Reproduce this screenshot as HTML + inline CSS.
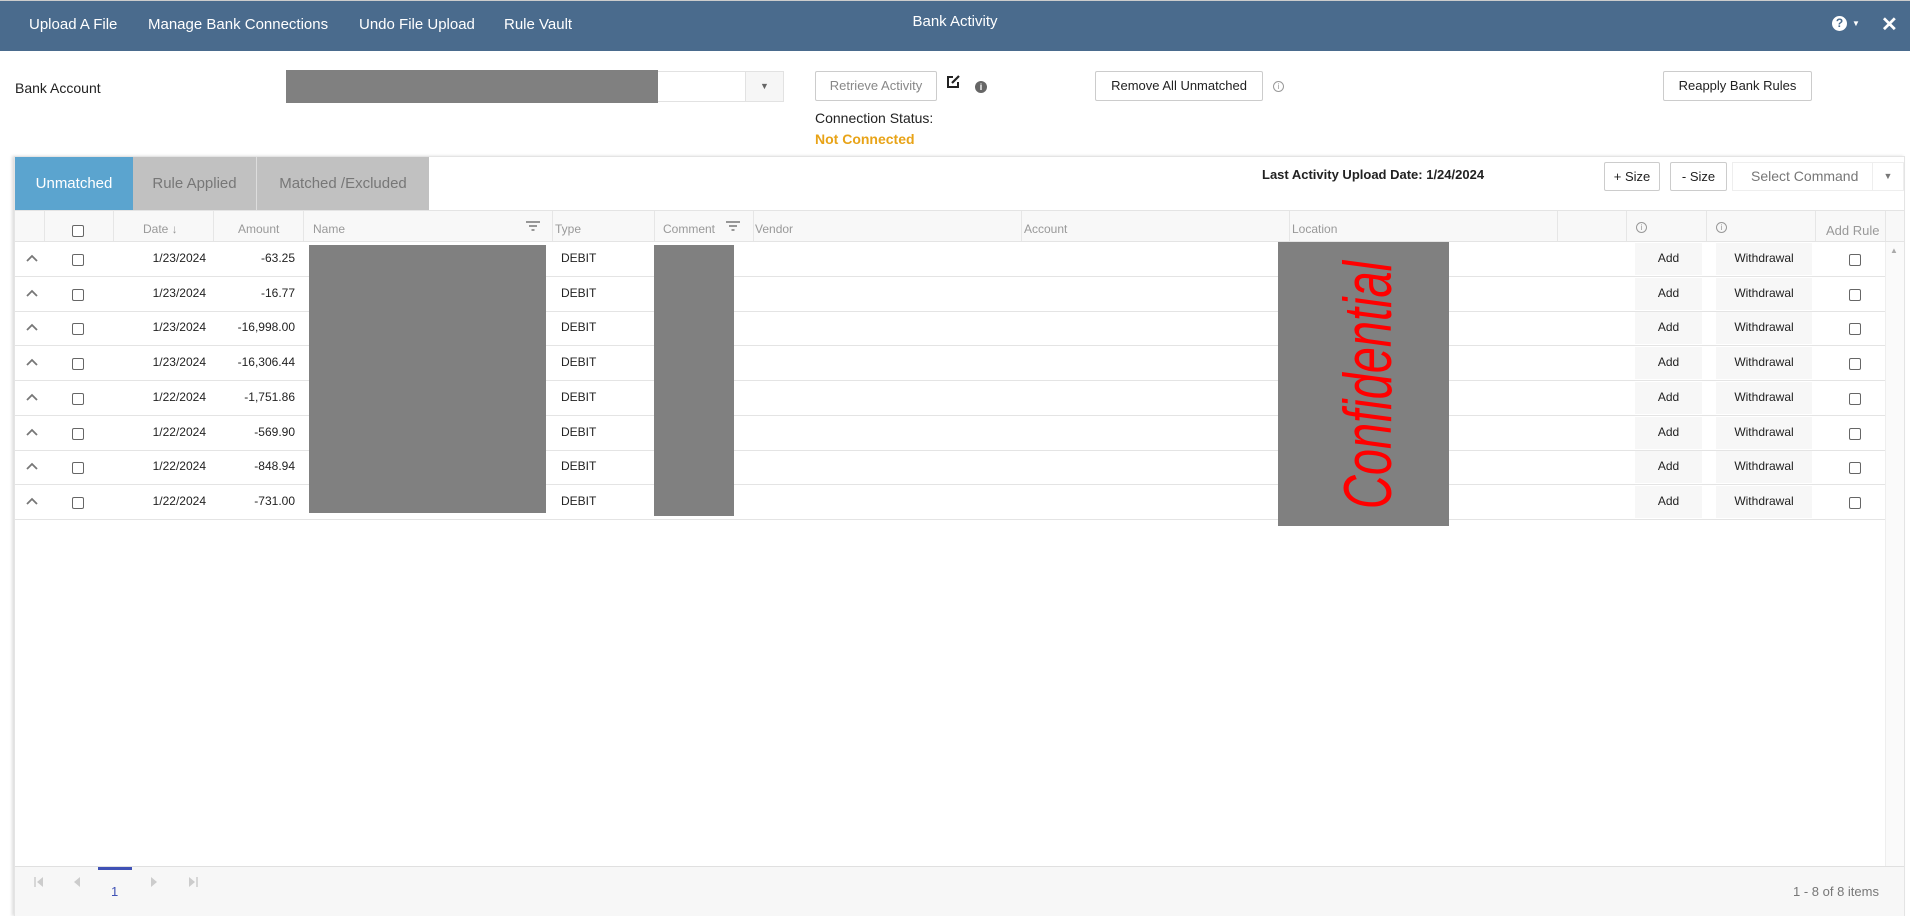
<!DOCTYPE html>
<html><head><meta charset="utf-8"><style>
*{box-sizing:border-box;margin:0;padding:0}
body{width:1910px;height:916px;position:relative;background:#fff;font-family:"Liberation Sans",Arial,sans-serif;overflow:hidden;color:#222}
.a{position:absolute}
.top{left:0;top:0;width:1910px;height:51px;background:#4a6b8d;border-top:1px solid #ccc}
.nav{color:#fff;font-size:15px;top:16px}
.btn{position:absolute;border:1px solid #ccc;background:#fff;font-size:13px;text-align:center;border-radius:2px}
.hd{font-size:12px;color:#999;top:222px}
.cell{font-size:12px;color:#222}
.cb{position:absolute;width:12px;height:12px;border:1px solid #666;border-radius:2px;background:#fff}
.gray{position:absolute;background:#808080}
.ii{position:absolute;width:11px;height:11px;border:1px solid #999;border-radius:50%;font-size:8px;color:#999;text-align:center;line-height:9px}
</style></head><body>
<div class="a top"></div>
<div class="a nav" style="left:29px">Upload A File</div>
<div class="a nav" style="left:148px">Manage Bank Connections</div>
<div class="a nav" style="left:359px">Undo File Upload</div>
<div class="a nav" style="left:504px">Rule Vault</div>
<div class="a" style="left:0;width:1910px;text-align:center;top:13px;color:#fff;font-size:15px">Bank Activity</div>
<div class="a" style="left:1832px;top:16px;width:15px;height:15px;border-radius:50%;background:#fff;color:#4a6b8d;font-size:12px;font-weight:bold;text-align:center;line-height:15px">?</div>
<div class="a" style="left:1852px;top:19px;color:#fff;font-size:8px">▼</div>
<div class="a" style="left:1881px;top:12px;color:#fff;font-size:20px;font-weight:bold">✕</div>

<div class="a" style="left:15px;top:80px;font-size:14px">Bank Account</div>
<div class="a" style="left:286px;top:71px;width:498px;height:31px;border:1px solid #e2e2e2"></div>
<div class="gray" style="left:286px;top:70px;width:372px;height:33px"></div>
<div class="a" style="left:745px;top:72px;width:38px;height:29px;background:#f6f6f6;border-left:1px solid #e2e2e2;text-align:center;font-size:9px;color:#666;line-height:29px">▼</div>
<div class="btn" style="left:815px;top:71px;width:122px;height:30px;line-height:28px;color:#888">Retrieve Activity</div>
<svg class="a" style="left:945px;top:74px" width="16" height="16" viewBox="0 0 16 16"><path d="M8 3H3v10h10V8" fill="none" stroke="#222" stroke-width="2"/><path d="M7 9l7-7" stroke="#222" stroke-width="2.2"/></svg>
<div class="a" style="left:975px;top:81px;width:12px;height:12px;border-radius:50%;background:#666;color:#fff;font-size:9px;text-align:center;line-height:12px;font-weight:bold">i</div>
<div class="a" style="left:815px;top:110px;font-size:14px">Connection Status:</div>
<div class="a" style="left:815px;top:131px;font-size:14px;font-weight:bold;color:#e8a317">Not Connected</div>
<div class="btn" style="left:1095px;top:71px;width:168px;height:30px;line-height:28px">Remove All Unmatched</div>
<div class="ii" style="left:1273px;top:81px">i</div>
<div class="btn" style="left:1663px;top:71px;width:149px;height:30px;line-height:28px">Reapply Bank Rules</div>

<div class="a" style="left:14px;top:156px;width:1891px;height:760px;border:1px solid #e4e4e4;box-shadow:-2px 0 3px #ddd"></div>
<div class="a" style="left:15px;top:157px;width:118px;height:53px;background:#5ba4cf;color:#fff;font-size:15px;text-align:center;line-height:53px">Unmatched</div>
<div class="a" style="left:133px;top:157px;width:124px;height:53px;background:#c1c1c1;color:#777;font-size:15px;text-align:center;line-height:53px;border-right:1px solid #ddd">Rule Applied</div>
<div class="a" style="left:257px;top:157px;width:172px;height:53px;background:#c1c1c1;color:#777;font-size:15px;text-align:center;line-height:53px">Matched /Excluded</div>
<div class="a" style="left:1262px;top:167px;font-size:13px;font-weight:bold">Last Activity Upload Date: 1/24/2024</div>
<div class="btn" style="left:1604px;top:162px;width:56px;height:29px;line-height:27px">+ Size</div>
<div class="btn" style="left:1670px;top:162px;width:57px;height:29px;line-height:27px">- Size</div>
<div class="a" style="left:1732px;top:162px;width:172px;height:29px;border:1px solid #eee;font-size:14px;color:#777;line-height:27px;padding-left:18px">Select Command</div>
<div class="a" style="left:1872px;top:163px;width:31px;height:27px;border-left:1px solid #eee;text-align:center;font-size:9px;color:#777;line-height:27px">▼</div>

<div class="a" style="left:15px;top:210px;width:1889px;height:32px;background:#f8f8f8;border-top:1px solid #e4e4e4;border-bottom:1px solid #e4e4e4"></div>
<div id="hl"></div>
<div class="cb" style="left:72px;top:225px"></div>
<div class="a hd" style="left:143px">Date ↓</div>
<div class="a hd" style="left:238px">Amount</div>
<div class="a hd" style="left:313px">Name</div>
<svg class="a" style="left:526px;top:221px" width="14" height="10"><path d="M0 1h14M3 5h8M5.5 9h3" stroke="#777" stroke-width="1.6"/></svg>
<div class="a hd" style="left:555px">Type</div>
<div class="a hd" style="left:663px">Comment</div>
<svg class="a" style="left:726px;top:221px" width="14" height="10"><path d="M0 1h14M3 5h8M5.5 9h3" stroke="#777" stroke-width="1.6"/></svg>
<div class="a hd" style="left:755px">Vendor</div>
<div class="a hd" style="left:1024px">Account</div>
<div class="a hd" style="left:1292px">Location</div>
<div class="ii" style="left:1636px;top:222px">i</div>
<div class="ii" style="left:1716px;top:222px">i</div>
<div class="a hd" style="left:1826px;top:223px;font-size:13px">Add Rule</div>
<div id="rows"></div>

<div class="gray" style="left:309px;top:245px;width:237px;height:268px"></div>
<div class="gray" style="left:654px;top:245px;width:80px;height:271px"></div>
<div class="gray" style="left:1278px;top:242px;width:171px;height:284px"></div>
<div class="a" style="left:1243px;top:357px;width:250px;height:56px;text-align:center;color:#f00;font-size:47px;font-style:italic;line-height:56px;transform:rotate(-90deg) scaleY(1.45)">Confidential</div>
<div class="a" style="left:1885px;top:242px;width:19px;height:624px;background:#fafafa;border-left:1px solid #eee"></div>
<div class="a" style="left:1890px;top:246px;font-size:8px;color:#aaa">▲</div>

<div class="a" style="left:15px;top:866px;width:1889px;height:50px;background:#f7f7f7;border-top:1px solid #e0e0e0"></div>
<div class="a" style="left:98px;top:867px;width:34px;height:3px;background:#3f51b5"></div>
<svg class="a" style="left:34px;top:877px" width="10" height="10"><path d="M1 0v10" stroke="#ccc" stroke-width="1.5"/><path d="M9 0v10L3 5z" fill="#ccc"/></svg>
<svg class="a" style="left:73px;top:877px" width="8" height="10"><path d="M7 0v10L1 5z" fill="#ccc"/></svg>
<div class="a" style="left:111px;top:884px;font-size:13px;color:#3f51b5">1</div>
<svg class="a" style="left:150px;top:877px" width="8" height="10"><path d="M1 0v10L7 5z" fill="#ccc"/></svg>
<svg class="a" style="left:188px;top:877px" width="10" height="10"><path d="M1 0v10L7 5z" fill="#ccc"/><path d="M9 0v10" stroke="#ccc" stroke-width="1.5"/></svg>
<div class="a" style="left:1793px;top:884px;font-size:13px;color:#777">1 - 8 of 8 items</div>
<script>
var cols=[44,113,213,303,552,654,753,1021,1289,1557,1626,1706,1815,1885],h='';
cols.forEach(function(x){h+='<div class="a" style="left:'+x+'px;top:211px;width:1px;height:30px;background:#e6e6e6"></div>';});
document.getElementById('hl').innerHTML=h;
var d=[['1/23/2024','-63.25'],['1/23/2024','-16.77'],['1/23/2024','-16,998.00'],['1/23/2024','-16,306.44'],['1/22/2024','-1,751.86'],['1/22/2024','-569.90'],['1/22/2024','-848.94'],['1/22/2024','-731.00']],r='';
d.forEach(function(v,i){var t=242+i*34.7;
r+='<div class="a" style="left:15px;top:'+(t+34)+'px;width:1870px;height:1px;background:#e4e4e4"></div>';
r+='<svg class="a" style="left:26px;top:'+(t+12)+'px" width="12" height="8"><path d="M1 7l5-5 5 5" fill="none" stroke="#777" stroke-width="1.8"/></svg>';
r+='<div class="cb" style="left:72px;top:'+(t+12)+'px"></div><div class="cb" style="left:1849px;top:'+(t+12)+'px"></div>';
r+='<div class="a cell" style="left:113px;width:93px;text-align:right;top:'+(t+9)+'px">'+v[0]+'</div>';
r+='<div class="a cell" style="left:213px;width:82px;text-align:right;top:'+(t+9)+'px">'+v[1]+'</div>';
r+='<div class="a cell" style="left:561px;top:'+(t+9)+'px">DEBIT</div>';
r+='<div class="a cell" style="left:1635px;top:'+(t+1)+'px;width:67px;height:32px;background:#f7f7f7;text-align:center;line-height:30px">Add</div>';
r+='<div class="a cell" style="left:1716px;top:'+(t+1)+'px;width:96px;height:32px;background:#f7f7f7;text-align:center;line-height:30px">Withdrawal</div>';});
document.getElementById('rows').innerHTML=r;
</script>
</body></html>
